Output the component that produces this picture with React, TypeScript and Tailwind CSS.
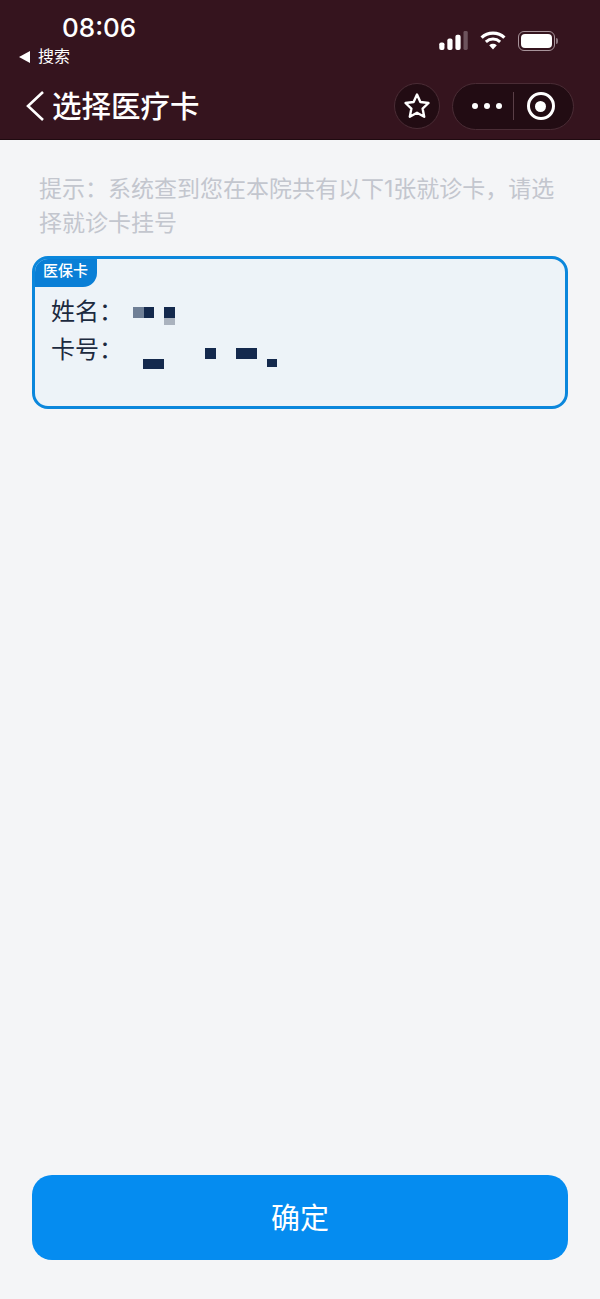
const FONT = 'font-["Inter","Noto_Sans_CJK_SC",sans-serif]';

const SignalIcon = () => (
  <svg width="29" height="19" viewBox="0 0 30 20">
    <rect x="0" y="12" width="5.5" height="8" rx="2" fill="#fff" />
    <rect x="8.5" y="8" width="5.5" height="12" rx="2" fill="#fff" />
    <rect x="17" y="4" width="5.5" height="16" rx="2" fill="#fff" />
    <rect x="25.5" y="0" width="4.5" height="20" rx="1.5" fill="#6d535c" />
  </svg>
);

const WifiIcon = () => (
  <svg width="26" height="19" viewBox="0 0 27 20" fill="none">
    <path d="M1.5 7 C8 0.5 19 0.5 25.5 7" stroke="#fff" strokeWidth="3.4" />
    <path d="M6 11.5 C10.5 7.5 16.5 7.5 21 11.5" stroke="#fff" strokeWidth="3.2" />
    <path d="M9.5 15 C12 13 15 13 17.5 15 L13.5 19.5 Z" fill="#fff" />
  </svg>
);

const BatteryIcon = () => (
  <div className="flex items-center">
    <div className="w-[37px] h-[20px] rounded-[6px] border border-[#a8949b] p-[2px]">
      <div className="w-full h-full rounded-[4px] bg-white" />
    </div>
    <div className="ml-[1px] w-[2px] h-[6px] rounded-r bg-[#8d7880]" />
  </div>
);

const StarIcon = () => (
  <svg width="28" height="28" viewBox="0 0 28 28" fill="none">
    <path
      d="M14 2.5 L17.4 10 L25.5 11 L19.6 16.6 L21.2 24.7 L14 20.7 L6.8 24.7 L8.4 16.6 L2.5 11 L10.6 10 Z"
      stroke="#fff"
      strokeWidth="2.4"
      strokeLinejoin="round"
    />
  </svg>
);

export default function App() {
  return (
    <div className={`${FONT} w-[600px] h-[1299px] flex flex-col bg-[#f4f5f7]`}>
      <header className="h-[140px] shrink-0 bg-[#35141e] border-b border-[#1f0a10] flex flex-col">
        <div className="flex justify-between pl-[62px] pr-[42px] pt-[12px] h-[44px]">
          <span className="text-[26px] leading-[32px] font-medium text-white">08:06</span>
          <div className="flex items-center gap-[12px] pt-[13px] h-[44px]">
            <SignalIcon />
            <WifiIcon />
            <BatteryIcon />
          </div>
        </div>
        <div className="flex items-center pl-[19px] h-[21px] mt-[2px] text-white">
          <span className="w-0 h-0 border-y-[6px] border-y-transparent border-r-[11px] border-r-white" />
          <span className="ml-[8px] text-[16px] leading-[21px]">搜索</span>
        </div>
        <div className="flex items-center justify-between pl-[26px] pr-[26px] mt-[14px] h-[50px]">
          <div className="flex items-center text-white">
            <svg width="18" height="30" viewBox="0 0 18 30" fill="none">
              <path d="M17 1 L2 15 L17 29" stroke="#fff" strokeWidth="2.6" />
            </svg>
            <h1 className="ml-[8px] text-[29.5px] leading-[34px] font-medium">选择医疗卡</h1>
          </div>
          <div className="flex items-center gap-[12px]">
            <button className="w-[46px] h-[46px] rounded-full bg-[#220c13] border border-[#4a2c35] flex items-center justify-center">
              <StarIcon />
            </button>
            <div className="w-[122px] h-[47px] rounded-full bg-[#220c13] border border-[#4a2c35] flex items-center">
              <div className="w-[60px] flex justify-center gap-[6px] pl-[7px]">
                <span className="w-[6px] h-[6px] rounded-full bg-white" />
                <span className="w-[6px] h-[6px] rounded-full bg-white" />
                <span className="w-[6px] h-[6px] rounded-full bg-white" />
              </div>
              <div className="w-px h-[28px] bg-[#5a3f47]" />
              <div className="flex-1 flex justify-center pr-[6px]">
                <div className="w-[28px] h-[28px] rounded-full border-[3px] border-white flex items-center justify-center">
                  <div className="w-[11px] h-[11px] rounded-full bg-white" />
                </div>
              </div>
            </div>
          </div>
        </div>
      </header>

      <main className="flex-1 flex flex-col px-[32px]">
        <p className="mt-[32px] pl-[7px] pr-[6px] text-[23px] leading-[34px] text-[#c3c6ce]">
          提示：系统查到您在本院共有以下1张就诊卡，请选择就诊卡挂号
        </p>

        <div className="relative mt-[16px] h-[153px] rounded-[16px] border-[3px] border-[#0b87dc] bg-[#edf3f8] overflow-hidden">
          <div className="w-[63px] h-[29px] -ml-px -mt-px rounded-br-[14px] bg-[#0a7fd6] text-white text-[15px] font-medium leading-[26px] text-center">
            医保卡
          </div>
          <div className="pl-[16px] mt-[6px] text-[24px] leading-[38px] text-[#1c2a3f]">
            <div>姓名：</div>
            <div>卡号：</div>
          </div>
          {/* redaction blocks over the name and the card number */}
          <div className="absolute left-[98px] top-[48px] w-[11px] h-[11px] bg-[#6f7f96]" />
          <div className="absolute left-[109px] top-[48px] w-[10px] h-[11px] bg-[#14294d]" />
          <div className="absolute left-[129px] top-[48px] w-[11px] h-[11px] bg-[#14294d]" />
          <div className="absolute left-[129px] top-[59px] w-[11px] h-[7px] bg-[#aab2be]" />
          <div className="absolute left-[108px] top-[100px] w-[21px] h-[10px] bg-[#14294d]" />
          <div className="absolute left-[170px] top-[89px] w-[11px] h-[11px] bg-[#14294d]" />
          <div className="absolute left-[201px] top-[89px] w-[21px] h-[11px] bg-[#14294d]" />
          <div className="absolute left-[232px] top-[100px] w-[10px] h-[8px] bg-[#14294d]" />
        </div>

        <button className="mt-auto mb-[39px] h-[85px] pt-[3px] rounded-[20px] bg-[#058cf0] text-white text-[29px]">
          确定
        </button>
      </main>
    </div>
  );
}
